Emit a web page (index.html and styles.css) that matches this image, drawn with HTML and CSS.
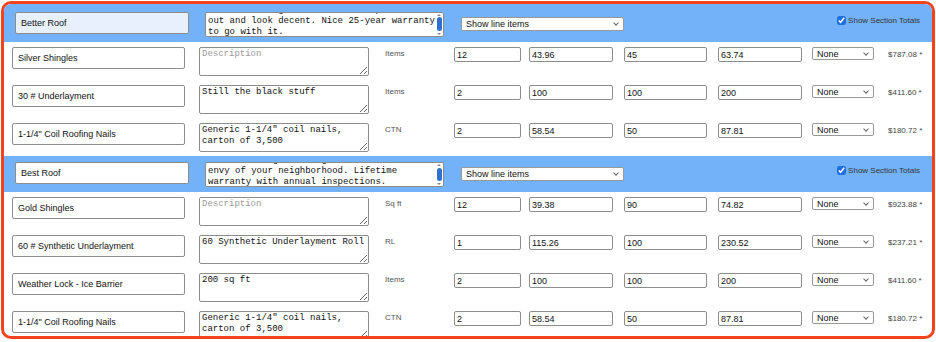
FILE: index.html
```html
<!DOCTYPE html>
<html lang="en">
<head>
    <meta charset="UTF-8">
    <meta name="viewport" content="width=device-width, initial-scale=1.0">
    <title>Estimate</title>
    <link rel="stylesheet" href="styles.css">
</head>
<body>

<div class="frame">
    <div class="section">
        <div class="section-head first">
            <input type="text" class="head-name autofill" value="Better Roof">
            <div class="desc-wrap">
                <textarea class="head-desc">Standard shingles that will keep the water out and look decent. Nice 25-year warranty to go with it.</textarea>
                <span class="thumb"></span>
            </div>
            <span class="pick head-view"><select><option>Show line items</option></select></span>
            <label class="totals"><input type="checkbox" checked>Show Section Totals</label>
        </div>
        <div class="line">
            <input type="text" class="line-name" value="Silver Shingles">
            <textarea class="line-desc" placeholder="Description"></textarea>
            <span class="unit">Items</span>
            <input type="text" class="num qty" value="12">
            <input type="text" class="num price" value="43.96">
            <input type="text" class="num markup" value="45">
            <input type="text" class="num rate" value="63.74">
            <span class="pick tax"><select><option>None</option></select></span>
            <span class="total">$787.08 *</span>
        </div>
        <div class="line">
            <input type="text" class="line-name" value="30 # Underlayment">
            <textarea class="line-desc">Still the black stuff</textarea>
            <span class="unit">Items</span>
            <input type="text" class="num qty" value="2">
            <input type="text" class="num price" value="100">
            <input type="text" class="num markup" value="100">
            <input type="text" class="num rate" value="200">
            <span class="pick tax"><select><option>None</option></select></span>
            <span class="total">$411.60 *</span>
        </div>
        <div class="line">
            <input type="text" class="line-name" value='1-1/4" Coil Roofing Nails'>
            <textarea class="line-desc">Generic 1-1/4" coil nails, carton of 3,500</textarea>
            <span class="unit">CTN</span>
            <input type="text" class="num qty" value="2">
            <input type="text" class="num price" value="58.54">
            <input type="text" class="num markup" value="50">
            <input type="text" class="num rate" value="87.81">
            <span class="pick tax"><select><option>None</option></select></span>
            <span class="total">$180.72 *</span>
        </div>
    </div>

    <div class="section">
        <div class="section-head">
            <input type="text" class="head-name" value="Best Roof">
            <div class="desc-wrap">
                <textarea class="head-desc">Premium designer shingles that will be the envy of your neighborhood. Lifetime warranty with annual inspections.</textarea>
                <span class="thumb"></span>
            </div>
            <span class="pick head-view"><select><option>Show line items</option></select></span>
            <label class="totals"><input type="checkbox" checked>Show Section Totals</label>
        </div>
        <div class="line">
            <input type="text" class="line-name" value="Gold Shingles">
            <textarea class="line-desc" placeholder="Description"></textarea>
            <span class="unit">Sq ft</span>
            <input type="text" class="num qty" value="12">
            <input type="text" class="num price" value="39.38">
            <input type="text" class="num markup" value="90">
            <input type="text" class="num rate" value="74.82">
            <span class="pick tax"><select><option>None</option></select></span>
            <span class="total">$923.88 *</span>
        </div>
        <div class="line">
            <input type="text" class="line-name" value="60 # Synthetic Underlayment">
            <textarea class="line-desc">60 Synthetic Underlayment Roll</textarea>
            <span class="unit">RL</span>
            <input type="text" class="num qty" value="1">
            <input type="text" class="num price" value="115.26">
            <input type="text" class="num markup" value="100">
            <input type="text" class="num rate" value="230.52">
            <span class="pick tax"><select><option>None</option></select></span>
            <span class="total">$237.21 *</span>
        </div>
        <div class="line">
            <input type="text" class="line-name" value="Weather Lock - Ice Barrier">
            <textarea class="line-desc">200 sq ft</textarea>
            <span class="unit">Items</span>
            <input type="text" class="num qty" value="2">
            <input type="text" class="num price" value="100">
            <input type="text" class="num markup" value="100">
            <input type="text" class="num rate" value="200">
            <span class="pick tax"><select><option>None</option></select></span>
            <span class="total">$411.60 *</span>
        </div>
        <div class="line">
            <input type="text" class="line-name" value='1-1/4" Coil Roofing Nails'>
            <textarea class="line-desc">Generic 1-1/4" coil nails, carton of 3,500</textarea>
            <span class="unit">CTN</span>
            <input type="text" class="num qty" value="2">
            <input type="text" class="num price" value="58.54">
            <input type="text" class="num markup" value="50">
            <input type="text" class="num rate" value="87.81">
            <span class="pick tax"><select><option>None</option></select></span>
            <span class="total">$180.72 *</span>
        </div>
    </div>
</div>

<script>
    // keep the section descriptions scrolled near their last lines
    document.querySelectorAll('.head-desc').forEach(box => {
        box.scrollTop = box.scrollHeight - box.clientHeight - 3;
    });
</script>

</body>
</html>
```

FILE: styles.css
```css
body {
    margin: 0;
    background: #fff;
    font-family: "Liberation Sans", Arial, sans-serif;
}
.frame {
    box-sizing: border-box;
    width: 934px;
    height: 338px;
    margin: 1px;
    border: 3px solid #f2431d;
    border-radius: 10px;
    overflow: hidden;
    background: #fff;
}
input, textarea, select {
    box-sizing: border-box;
    margin: 0;
    flex-shrink: 0;
    color: #111;
    font-family: "Liberation Sans", Arial, sans-serif;
    font-size: 9px;
    background: #fff;
    border: 1px solid #8d8d8d;
    border-radius: 2px;
    outline: none;
}
textarea {
    font-family: "Liberation Mono", "Courier New", monospace;
    font-size: 9px;
    line-height: 11px;
    padding: 1px 2px;
    resize: vertical;
}
textarea::placeholder {
    color: #9a9a9a;
}

/* select boxes with a thin chevron */
.pick {
    position: relative;
    display: flex;
    flex-shrink: 0;
}
.pick select {
    width: 100%;
    height: 100%;
    padding: 0 12px 0 4px;
    appearance: none;
    -webkit-appearance: none;
    border-color: #999;
}
.pick::after {
    content: "";
    position: absolute;
    right: 6px;
    top: 50%;
    width: 3px;
    height: 3px;
    margin-top: -3px;
    border-right: 1px solid #666;
    border-bottom: 1px solid #666;
    transform: rotate(45deg);
    pointer-events: none;
}

.section-head {
    box-sizing: border-box;
    display: flex;
    align-items: flex-start;
    height: 36px;
    padding: 6px 12px 0 11px;
    background: #73b2f8;
}
.section-head.first {
    height: 38px;
    padding-top: 8px;
}
.head-name {
    width: 174px;
    height: 22px;
    padding: 0 5px;
}
.head-name.autofill {
    background: #e8f0fe;
}
.desc-wrap {
    position: relative;
    display: flex;
    flex-shrink: 0;
    margin-left: 16px;
}
.head-desc {
    width: 239px;
    height: 25px;
    padding-right: 7px;
    overflow: hidden;
    resize: none;
}
.desc-wrap::before, .desc-wrap::after {
    content: "";
    position: absolute;
    right: 3px;
    border-left: 2px solid transparent;
    border-right: 2px solid transparent;
}
.desc-wrap::before {
    top: 2px;
    border-bottom: 2px solid #888;
}
.desc-wrap::after {
    bottom: 2px;
    border-top: 2px solid #888;
}
.thumb {
    position: absolute;
    right: 2px;
    top: 5px;
    width: 5px;
    height: 14px;
    background: #2f6fce;
    border-radius: 3px;
}
.section-head:not(.first) .thumb {
    top: 6px;
    height: 13px;
}
.head-view {
    width: 163px;
    height: 14px;
    margin: 5px 0 0 17px;
}
.totals {
    display: flex;
    align-items: center;
    margin: 4px 0 0 auto;
    color: #333;
    font-size: 8px;
}
.totals input {
    width: 9px;
    height: 9px;
    margin: 0 2px 0 0;
    accent-color: #1f6fe0;
}
.line {
    box-sizing: border-box;
    display: flex;
    align-items: flex-start;
    height: 38px;
    padding: 5px 0 0 8px;
}
.line-name {
    width: 173px;
    height: 22px;
    padding: 0 5px;
}
.line-desc {
    width: 170px;
    height: 29px;
    margin-left: 14px;
    overflow: hidden;
}
.unit {
    flex-shrink: 0;
    width: 69px;
    margin: 2px 0 0 16px;
    color: #555;
    font-size: 8px;
}
.num {
    height: 15px;
    padding: 0 2px;
}
.qty {
    width: 67px;
}
.price {
    width: 84px;
    margin-left: 8px;
}
.markup {
    width: 83px;
    margin-left: 11px;
}
.rate {
    width: 84px;
    margin-left: 11px;
}
.tax {
    width: 62px;
    height: 13px;
    margin-left: 10px;
}
.total {
    flex-shrink: 0;
    margin: 3px 0 0 14px;
    color: #444;
    font-size: 8px;
}
```
